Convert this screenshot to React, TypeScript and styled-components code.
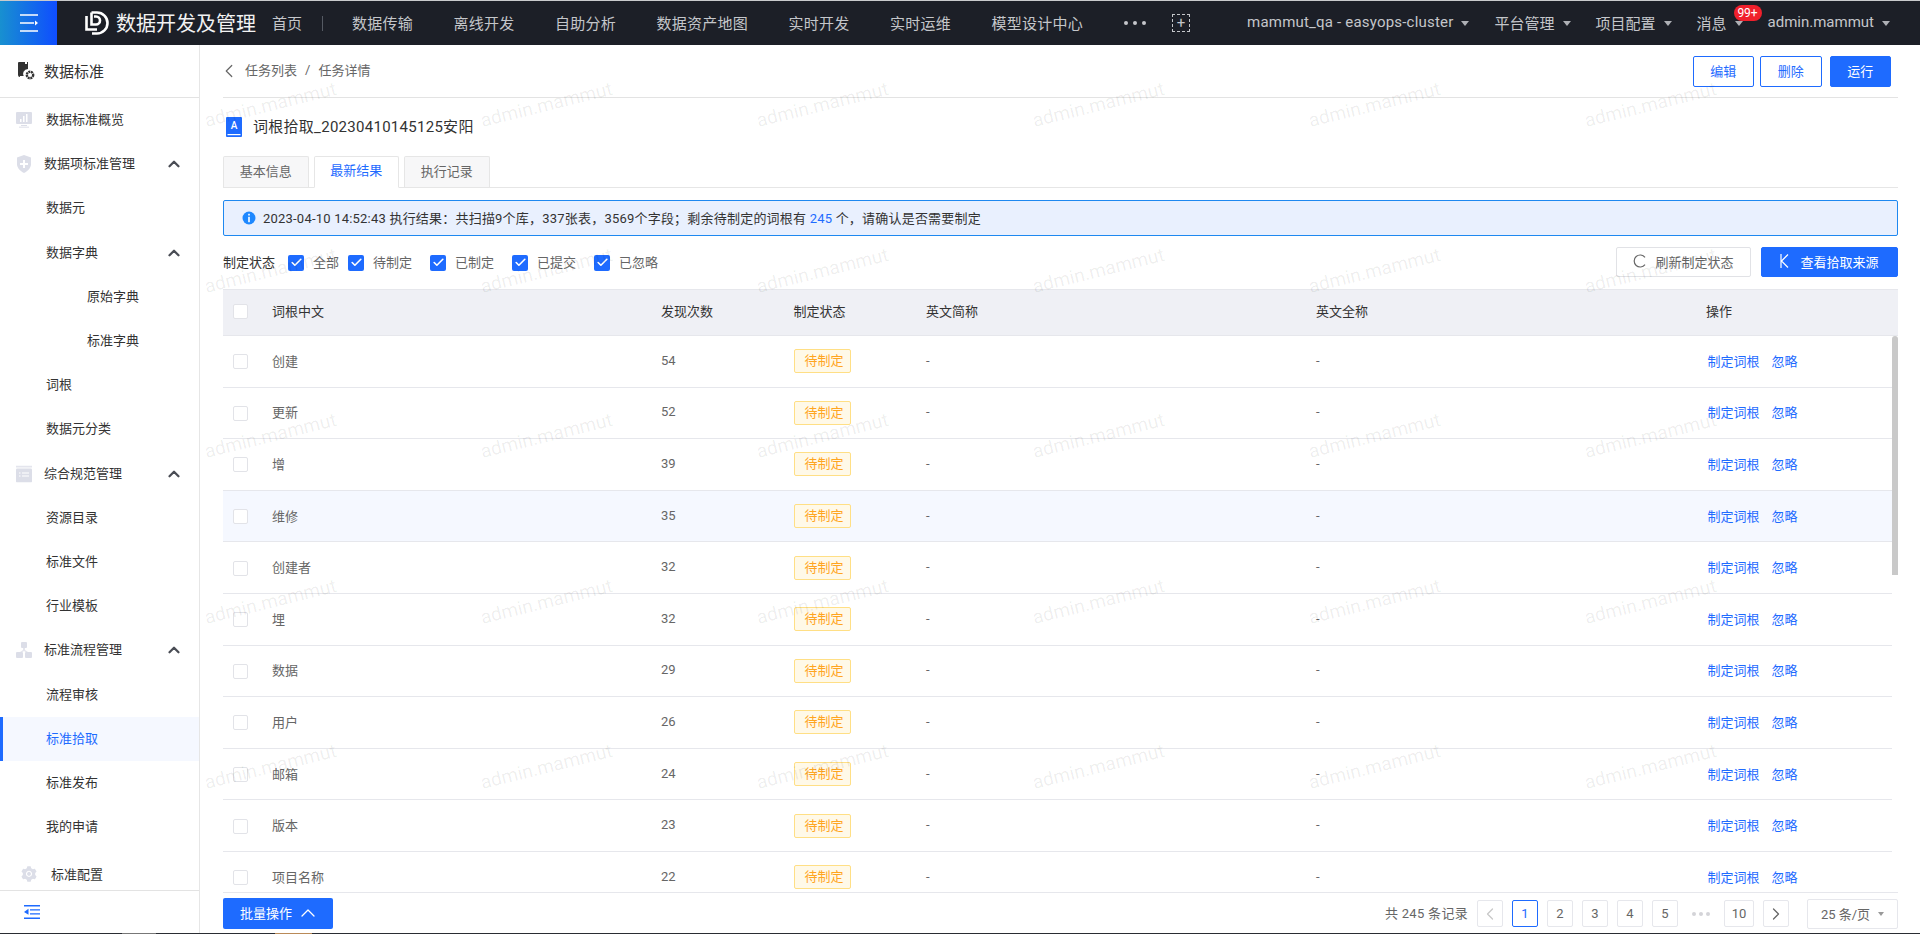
import React from 'react'
import styled, { createGlobalStyle } from 'styled-components'
import { AiFillSetting } from 'react-icons/ai'
import { Check, ChevronLeft, ChevronRight, ChevronUp } from 'lucide-react'

const BLUE = '#1e6bff'

const GlobalStyle = createGlobalStyle`
  html, body, #root {
    margin: 0;
    height: 100%;
  }
  body {
    font-family: Roboto, "Noto Sans CJK SC", sans-serif;
    font-size: 13px;
    color: #333;
    background: #fff;
    overflow: hidden;
  }
  * {
    box-sizing: border-box;
  }
`

type IconKind = 'monitor' | 'shield' | 'list' | 'tree'

type MenuEntry = {
  label: string
  indent: number
  icon?: IconKind
  open?: boolean
  active?: boolean
}

const menu: MenuEntry[] = [
  { label: '数据标准概览', indent: 46, icon: 'monitor' },
  { label: '数据项标准管理', indent: 44, icon: 'shield', open: true },
  { label: '数据元', indent: 46 },
  { label: '数据字典', indent: 46, open: true },
  { label: '原始字典', indent: 87 },
  { label: '标准字典', indent: 87 },
  { label: '词根', indent: 46 },
  { label: '数据元分类', indent: 46 },
  { label: '综合规范管理', indent: 44, icon: 'list', open: true },
  { label: '资源目录', indent: 46 },
  { label: '标准文件', indent: 46 },
  { label: '行业模板', indent: 46 },
  { label: '标准流程管理', indent: 44, icon: 'tree', open: true },
  { label: '流程审核', indent: 46 },
  { label: '标准拾取', indent: 46, active: true },
  { label: '标准发布', indent: 46 },
  { label: '我的申请', indent: 46 }
]

const navLinks = ['数据传输', '离线开发', '自助分析', '数据资产地图', '实时开发', '实时运维', '模型设计中心']

const statusFilters = ['全部', '待制定', '已制定', '已提交', '已忽略']

const roots: [string, number][] = [
  ['创建', 54],
  ['更新', 52],
  ['增', 39],
  ['维修', 35],
  ['创建者', 32],
  ['埋', 32],
  ['数据', 29],
  ['用户', 26],
  ['邮箱', 24],
  ['版本', 23],
  ['项目名称', 22]
]

const MenuIcon = ({ kind }: { kind: IconKind }) => {
  if (kind === 'monitor') {
    return (
      <svg width="16" height="16" viewBox="0 0 16 16">
        <rect width="16" height="12" rx="1" fill="#dcdee8" />
        <rect x="5" y="13" width="6" height="1" fill="#dcdee8" />
        <rect x="3" y="14.5" width="10" height="1.5" fill="#e8e9f0" />
        <rect x="4" y="7" width="1.5" height="3" fill="#fff" />
        <rect x="7" y="4" width="1.5" height="6" fill="#fff" />
        <rect x="10" y="2" width="1.5" height="8" fill="#fff" />
      </svg>
    )
  }
  if (kind === 'shield') {
    return (
      <svg width="16" height="18" viewBox="0 0 16 18">
        <path d="M8 0 15 2.5V9c0 4-3 7-7 9-4-2-7-5-7-9V2.500Z" fill="#dcdee8" />
        <path d="M7 5h2v3h3v2H9v3H7v-3H4V8h3Z" fill="#fff" />
      </svg>
    )
  }
  if (kind === 'list') {
    return (
      <svg width="16" height="17" viewBox="0 0 16 17">
        <rect width="16" height="2" fill="#e4e5ed" />
        <rect y="3" width="16" height="14" rx="1" fill="#dcdee8" />
        <path d="M3 7h1.500v1H3Zm3 0h7v1H6Zm-3 3h1.500v1H3Zm3 0h7v1H6Z" fill="#fff" />
      </svg>
    )
  }
  return (
    <svg width="16" height="16" viewBox="0 0 16 16">
      <rect x="5" width="6" height="6" rx="1" fill="#dcdee8" />
      <rect y="10" width="7" height="6" rx="1" fill="#dcdee8" />
      <rect x="9" y="10" width="7" height="6" rx="1" fill="#dcdee8" />
      <path d="M7 6h2v2l3 2H9.500L8 9 6.500 10H4l3-2Z" fill="#e4e5ed" />
    </svg>
  )
}

const App = () => (
  <Page>
    <GlobalStyle />
    <TopEdge />
    <Header>
      <MenuToggle>
        <svg width="18" height="18" viewBox="0 0 18 18" fill="none" stroke="#fff" strokeWidth="1.600">
          <path d="M0 1h18M0 9h14M0 17h18" />
          <path d="M15 6.500 18 9l-3 2.500Z" fill="#fff" stroke="none" />
        </svg>
      </MenuToggle>
      <Logo viewBox="0 0 24 24" fill="none" stroke="#fff" strokeWidth="2.600">
        <path d="M1.500 5v13.500H12" />
        <path d="M6.500 1.500H12a10.500 10.500 0 0 1 0 21H7" />
        <path d="M6.500 1.500V13.500H11a4 4 0 0 0 0-8H9" />
      </Logo>
      <ProductName>数据开发及管理</ProductName>
      <HomeLink>首页</HomeLink>
      <NavDivider />
      <NavList>
        {navLinks.map(link => (
          <NavLink key={link}>{link}</NavLink>
        ))}
      </NavList>
      <MoreDots>
        <i />
        <i />
        <i />
      </MoreDots>
      <AddBox>+</AddBox>
      <UserArea>
        <DropItem $wide>
          mammut_qa - easyops-cluster
          <Caret />
        </DropItem>
        <DropItem>
          平台管理
          <Caret />
        </DropItem>
        <DropItem>
          项目配置
          <Caret />
        </DropItem>
        <DropItem>
          消息
          <Caret />
          <Badge>99+</Badge>
        </DropItem>
        <DropItem>
          admin.mammut
          <Caret />
        </DropItem>
      </UserArea>
    </Header>
    <Body>
      <Sidebar>
        <SideTitle>
          <svg width="17" height="18" viewBox="0 0 17 18">
            <path d="M1 0h6v2h2V0h1v7a5 5 0 0 0-4 8H2a2 2 0 0 1-2-2V1a1 1 0 0 1 1-1Z" fill="#333" />
            <rect x="2" y="14" width="4" height="1.500" fill="#fff" />
            <circle cx="12" cy="13" r="3.200" fill="none" stroke="#333" strokeWidth="2.400" strokeDasharray="2 .6" />
          </svg>
          <span>数据标准</span>
        </SideTitle>
        <MenuList>
          {menu.map(item => (
            <MenuItem key={item.label} $indent={item.indent} $active={item.active}>
              {item.icon && (
                <MenuIconSlot>
                  <MenuIcon kind={item.icon} />
                </MenuIconSlot>
              )}
              {item.label}
              {item.open && <OpenArrow size={18} strokeWidth={3} />}
            </MenuItem>
          ))}
          <ConfigItem>
            <AiFillSetting size={18} color="#dcdee8" />
            <span>标准配置</span>
          </ConfigItem>
        </MenuList>
        <SideFooter>
          <svg width="16" height="14" viewBox="0 0 16 14">
            <path d="M0 0h16v1.400H0Zm6 4.200h10v1.400H6Zm0 4h10v1.400H6ZM0 12.600h16V14H0Z" fill={BLUE} />
            <path d="M4.500 3.800v6L0 7Z" fill={BLUE} />
          </svg>
        </SideFooter>
      </Sidebar>
      <Main>
        <TopBar>
          <Crumbs>
            <BackArrow size={22} color="#666" strokeWidth={1.300} />
            <CrumbLink>任务列表</CrumbLink>
            <CrumbSep>/</CrumbSep>
            <span>任务详情</span>
          </Crumbs>
          <TopActions>
            <OutlineButton>编辑</OutlineButton>
            <OutlineButton>删除</OutlineButton>
            <PrimaryButton>运行</PrimaryButton>
          </TopActions>
        </TopBar>
        <TitleRow>
          <svg width="16" height="20" viewBox="0 0 16 20">
            <rect width="16" height="20" rx="1" fill={BLUE} />
            <rect x="1.500" y="17" width="13" height="1.200" fill="#fff" />
            <text x="8" y="11.500" textAnchor="middle" fontSize="10" fontFamily="Roboto" fontWeight="500" fill="#fff">
              A
            </text>
          </svg>
          <TitleText>词根拾取_20230410145125安阳</TitleText>
        </TitleRow>
        <Tabs>
          <Tab>基本信息</Tab>
          <Tab $active>最新结果</Tab>
          <Tab>执行记录</Tab>
        </Tabs>
        <Alert>
          <svg width="14" height="14" viewBox="0 0 14 14">
            <circle cx="7" cy="7" r="6.500" fill="#1e88ff" />
            <rect x="6.200" y="2.800" width="1.600" height="1.700" fill="#fff" />
            <rect x="6.200" y="5.800" width="1.600" height="5.400" fill="#fff" />
          </svg>
          <AlertText>
            2023-04-10 14:52:43 执行结果：共扫描9个库，337张表，3569个字段；剩余待制定的词根有 <Count>245</Count> 个，请确认是否需要制定
          </AlertText>
        </Alert>
        <FilterRow>
          <FilterLabel>制定状态</FilterLabel>
          {statusFilters.map((status, index) => (
            <FilterOption key={status} $first={index === 0}>
              <CheckedBox>
                <Check size={13} color="#fff" strokeWidth={3} />
              </CheckedBox>
              {status}
            </FilterOption>
          ))}
          <FilterActions>
            <GhostButton>
              <svg width="13" height="14" viewBox="0 0 13 14" fill="none" stroke="#666" strokeWidth="1.200">
                <path d="M12 3.400A6 6 0 1 0 12 10.600" />
              </svg>
              刷新制定状态
            </GhostButton>
            <SourceButton>
              <svg width="9" height="14" viewBox="0 0 9 14" fill="none" stroke="#fff" strokeWidth="1.200">
                <path d="M1 0v14M8 0.500 1.500 7 8 13.500" />
              </svg>
              查看拾取来源
            </SourceButton>
          </FilterActions>
        </FilterRow>
        <TableWrap>
          <HeadRow>
            <span>
              <EmptyBox $drop={3} />
            </span>
            <span>词根中文</span>
            <span>发现次数</span>
            <span>制定状态</span>
            <span>英文简称</span>
            <span>英文全称</span>
            <span>操作</span>
          </HeadRow>
          <TableScroll>
            <RowList>
              {roots.map(([name, times]) => (
                <BodyRow key={name} $hover={name === '维修'}>
                  <span>
                    <EmptyBox $drop={3} />
                  </span>
                  <span>{name}</span>
                  <span>{times}</span>
                  <span>
                    <StatusTag>待制定</StatusTag>
                  </span>
                  <span>-</span>
                  <span>-</span>
                  <RowActions>
                    <TextLink>制定词根</TextLink>
                    <TextLink>忽略</TextLink>
                  </RowActions>
                </BodyRow>
              ))}
            </RowList>
            <ScrollThumb />
          </TableScroll>
        </TableWrap>
        <Footer>
          <BatchButton>
            <span>批量操作</span>
            <ChevronUp size={24} color="#fff" strokeWidth={1.300} />
          </BatchButton>
          <Pager>
            <PagerTotal>共 245 条记录</PagerTotal>
            <PageCell>
              <ChevronLeft size={20} color="#c8c8c8" strokeWidth={1.500} />
            </PageCell>
            <PageCell $current>1</PageCell>
            <PageCell>2</PageCell>
            <PageCell>3</PageCell>
            <PageCell>4</PageCell>
            <PageCell>5</PageCell>
            <PageDots>
              <i />
              <i />
              <i />
            </PageDots>
            <PageCell $wide>10</PageCell>
            <PageCell>
              <ChevronRight size={20} color="#666" strokeWidth={1.500} />
            </PageCell>
            <PageSize>
              25 条/页
              <SizeCaret />
            </PageSize>
          </Pager>
        </Footer>
        <WatermarkLayer aria-hidden="true">
          {Array.from({ length: 30 }).map((_, i) => (
            <Watermark key={i}>admin.mammut</Watermark>
          ))}
        </WatermarkLayer>
      </Main>
    </Body>
    <BottomEdge />
  </Page>
)

export default App

const Page = styled('div')`
  display: flex;
  flex-direction: column;
  width: 1920px;
  height: 934px;
  overflow: hidden;
`

const TopEdge = styled('div')`
  height: 1px;
  flex: none;
  background: #c9cacc;
`

const BottomEdge = styled('div')`
  height: 1px;
  flex: none;
  background: linear-gradient(
    to right,
    #2a2d33 0 122px,
    #777 122px 156px,
    #2a2d33 156px 275px,
    #b98a58 275px 312px,
    #2a2d33 312px
  );
`

const Header = styled('header')`
  display: flex;
  align-items: center;
  flex: none;
  height: 44px;
  padding-right: 30px;
  background: #1c1f27;
  color: #c4c6ca;
  font-size: 15px;
`

const MenuToggle = styled('div')`
  display: flex;
  align-items: center;
  justify-content: center;
  width: 57px;
  height: 100%;
  background: linear-gradient(90deg, #1890d0, #0f4dff);
`

const Logo = styled('svg')`
  width: 24px;
  height: 24px;
  margin-left: 28px;
`

const ProductName = styled('div')`
  margin-left: 7px;
  padding-bottom: 2px;
  font-size: 20px;
  color: #f2f2f2;
`

const HomeLink = styled('span')`
  margin-left: 16px;
  padding-bottom: 2px;
`

const NavDivider = styled('i')`
  width: 1px;
  height: 15px;
  margin: 0 29px 0 20px;
  background: #555a63;
`

const NavList = styled('nav')`
  display: flex;
  gap: 40.500px;
  padding-bottom: 2px;
  letter-spacing: 0.25px;
`

const NavLink = styled('span')`
  white-space: nowrap;
`

const MoreDots = styled('div')`
  display: flex;
  gap: 5px;
  margin-left: 41px;
  i {
    width: 4px;
    height: 4px;
    border-radius: 50%;
    background: #c4c6ca;
  }
`

const AddBox = styled('div')`
  display: flex;
  align-items: center;
  justify-content: center;
  width: 18px;
  height: 18px;
  margin-left: 26px;
  border: 1px dashed #c4c6ca;
  font-size: 15px;
  line-height: 1;
`

const UserArea = styled('div')`
  display: flex;
  align-items: center;
  gap: 25px;
  margin-left: auto;
`

const DropItem = styled('div')<{ $wide?: boolean }>`
  position: relative;
  display: flex;
  align-items: center;
  padding-bottom: 2px;
  letter-spacing: ${props => (props.$wide ? '0.2px' : 'normal')};
  white-space: nowrap;
`

const Caret = styled('i')`
  width: 0;
  height: 0;
  margin: 2px 0 0 8px;
  border-left: 4px solid transparent;
  border-right: 4px solid transparent;
  border-top: 5px solid #aeb0b5;
`

const Badge = styled('span')`
  position: absolute;
  top: -7px;
  right: -19px;
  width: 28px;
  height: 16px;
  border-radius: 8px;
  background: #f0202c;
  color: #fff;
  font-size: 12px;
  line-height: 16px;
  text-align: center;
`

const Body = styled('div')`
  display: flex;
  flex: 1;
  min-height: 0;
`

const Sidebar = styled('aside')`
  display: flex;
  flex-direction: column;
  flex: none;
  width: 200px;
  border-right: 1px solid #e6e6e6;
`

const SideTitle = styled('div')`
  display: flex;
  align-items: center;
  gap: 9px;
  flex: none;
  height: 53px;
  padding-left: 18px;
  border-bottom: 1px solid #e3e3e3;
  font-size: 15px;
  span {
    padding-bottom: 2px;
  }
`

const MenuList = styled('div')`
  flex: 1;
  min-height: 0;
  overflow: hidden;
`

const MenuItem = styled('div')<{ $indent: number; $active?: boolean }>`
  position: relative;
  display: flex;
  align-items: center;
  height: 44.2px;
  padding-bottom: 3px;
  padding-left: ${props => props.$indent}px;
  background: ${props => (props.$active ? '#f5f8ff' : 'transparent')};
  color: ${props => (props.$active ? BLUE : '#333')};
  border-left: ${props => (props.$active ? `3px solid ${BLUE}` : 'none')};
  ${props => props.$active && `padding-left: ${props.$indent - 3}px;`}
`

const MenuIconSlot = styled('span')`
  position: absolute;
  left: 16px;
  top: 50%;
  display: flex;
  transform: translateY(-50%);
`

const OpenArrow = styled(ChevronUp)`
  position: absolute;
  right: 16px;
  top: 13px;
  color: #4a4d55;
`

const ConfigItem = styled('div')`
  display: flex;
  align-items: center;
  gap: 13px;
  height: 44px;
  margin-top: 3px;
  padding-left: 20px;
  span {
    padding-bottom: 2px;
  }
`

const SideFooter = styled('div')`
  display: flex;
  align-items: center;
  flex: none;
  height: 43px;
  padding: 0 0 0 24px;
  border-top: 1px solid #e3e3e3;
`

const Main = styled('main')`
  position: relative;
  display: flex;
  flex-direction: column;
  flex: 1;
  min-width: 0;
  padding: 0 22px 0 23px;
  overflow: hidden;
`

const TopBar = styled('div')`
  display: flex;
  align-items: center;
  justify-content: space-between;
  flex: none;
  height: 53px;
  padding: 1px 7px 0 0;
  border-bottom: 1px solid #e3e3e3;
`

const Crumbs = styled('div')`
  display: flex;
  align-items: center;
  color: #666;
  span {
    padding-bottom: 4px;
  }
`

const BackArrow = styled(ChevronLeft)`
  margin: 0 0 1px -5px;
`

const CrumbLink = styled('span')`
  margin-left: 5px;
`

const CrumbSep = styled('span')`
  margin: 0 8px;
`

const TopActions = styled('div')`
  display: flex;
  gap: 6px;
`

const OutlineButton = styled('button')`
  width: 61.500px;
  height: 31px;
  padding: 0 0 2px;
  border: 1px solid ${BLUE};
  border-radius: 2px;
  background: #fff;
  color: ${BLUE};
  font: inherit;
`

const PrimaryButton = styled(OutlineButton)`
  margin-left: 2px;
  background: ${BLUE};
  color: #fff;
`

const TitleRow = styled('div')`
  display: flex;
  align-items: center;
  gap: 11px;
  flex: none;
  height: 58px;
  padding-left: 3px;
  font-size: 15px;
`

const TitleText = styled('span')`
  padding-bottom: 3px;
  letter-spacing: 0.28px;
`

const Tabs = styled('div')`
  display: flex;
  gap: 5px;
  flex: none;
  height: 32px;
  border-bottom: 1px solid #e6e6e6;
`

const Tab = styled('div')<{ $active?: boolean }>`
  display: flex;
  align-items: center;
  justify-content: center;
  width: 85.500px;
  height: ${props => (props.$active ? '32px' : '31px')};
  padding-bottom: ${props => (props.$active ? '5px' : '4px')};
  border: 1px solid #e6e6e6;
  border-bottom: ${props => (props.$active ? '1px solid #fff' : 'none')};
  border-radius: 2px 2px 0 0;
  background: ${props => (props.$active ? '#fff' : '#f7f7f8')};
  color: ${props => (props.$active ? BLUE : '#666')};
`

const Alert = styled('div')`
  display: flex;
  align-items: center;
  gap: 7px;
  flex: none;
  height: 36px;
  margin-top: 12px;
  padding-left: 18px;
  border: 1px solid #1e88f0;
  border-radius: 2px;
  background: #e9f0fe;
`

const AlertText = styled('span')`
  padding-bottom: 2px;
  letter-spacing: 0.21px;
`

const Count = styled('span')`
  color: ${BLUE};
`

const FilterRow = styled('div')`
  display: flex;
  align-items: center;
  flex: none;
  height: 30px;
  margin-top: 11px;
`

const FilterLabel = styled('span')`
  margin-right: 13px;
  padding-bottom: 2px;
`

const FilterOption = styled('label')<{ $first?: boolean }>`
  display: flex;
  align-items: center;
  gap: 9px;
  margin-left: ${props => (props.$first ? 0 : 18)}px;
  padding-bottom: 2px;
  color: #666;
  &:nth-of-type(2) {
    margin-left: 9px;
  }
`

const CheckedBox = styled('span')`
  display: flex;
  align-items: center;
  justify-content: center;
  width: 16px;
  height: 16px;
  margin-top: 3px;
  border-radius: 2px;
  background: ${BLUE};
`

const FilterActions = styled('div')`
  display: flex;
  gap: 10px;
  margin-left: auto;
`

const GhostButton = styled('button')`
  display: flex;
  align-items: center;
  justify-content: center;
  gap: 9px;
  width: 135px;
  height: 30px;
  padding: 0 0 2px;
  border: 1px solid #e1e2e6;
  border-radius: 2px;
  background: #fff;
  color: #666;
  font: inherit;
`

const SourceButton = styled(GhostButton)`
  gap: 11px;
  width: 137px;
  border-color: ${BLUE};
  background: ${BLUE};
  color: #fff;
`

const TableWrap = styled('div')`
  display: flex;
  flex-direction: column;
  flex: 1;
  min-height: 0;
  margin-top: 12px;
`

const columns = '49px 389px 132.500px 132.500px 390px 390px 1fr'

const HeadRow = styled('div')`
  display: grid;
  grid-template-columns: ${columns};
  align-items: center;
  flex: none;
  height: 47px;
  padding-bottom: 5px;
  border-top: 1px solid #e6e7ec;
  border-bottom: 1px solid #e6e7ec;
  background: #eff0f5;
  color: #333;
  span:first-child {
    display: flex;
    padding-left: 10px;
  }
`

const TableScroll = styled('div')`
  display: flex;
  flex: 1;
  min-height: 0;
  overflow: hidden;
`

const RowList = styled('div')`
  flex: 1;
  min-width: 0;
`

const BodyRow = styled('div')<{ $hover?: boolean }>`
  display: grid;
  grid-template-columns: ${columns};
  align-items: center;
  height: 51.600px;
  padding-bottom: 2px;
  border-bottom: 1px solid #e6e7ec;
  background: ${props => (props.$hover ? '#f5f8ff' : 'transparent')};
  color: #666;
  span:first-child {
    display: flex;
    padding-left: 10px;
  }
`

const ScrollThumb = styled('div')`
  flex: none;
  width: 6px;
  height: 239px;
  border-radius: 3px 3px 0 0;
  background: #c9c9c9;
`

const EmptyBox = styled('i')<{ $drop: number }>`
  width: 15px;
  height: 15px;
  margin-top: ${props => props.$drop}px;
  border: 1px solid #e2e3e8;
  border-radius: 2px;
  background: #fff;
`

const StatusTag = styled('span')`
  display: block;
  width: 57px;
  height: 24px;
  margin-top: 2px;
  border: 1px solid #ffdf85;
  border-radius: 2px;
  background: #fff9e8;
  color: #ffa51f;
  line-height: 21px;
  text-align: center;
`

const RowActions = styled('span')`
  display: flex;
  gap: 12px;
  padding-left: 1.500px;
`

const TextLink = styled('a')`
  color: ${BLUE};
`

const Footer = styled('div')`
  display: flex;
  align-items: center;
  justify-content: space-between;
  flex: none;
  height: 41px;
  padding-top: 1px;
  border-top: 1px solid #e6e7ec;
`

const BatchButton = styled('button')`
  display: flex;
  align-items: center;
  gap: 4px;
  width: 110px;
  height: 31px;
  padding: 0 0 1px 17px;
  border: none;
  border-radius: 2px;
  background: ${BLUE};
  color: #fff;
  font: inherit;
  span {
    padding-bottom: 2px;
  }
`

const Pager = styled('div')`
  display: flex;
  align-items: center;
  gap: 9px;
  color: #666;
`

const PagerTotal = styled('span')`
  padding-bottom: 2px;
  letter-spacing: 0.3px;
`

const PageCell = styled('div')<{ $current?: boolean; $wide?: boolean }>`
  display: flex;
  align-items: center;
  justify-content: center;
  width: ${props => (props.$wide ? 30 : 26)}px;
  height: 27px;
  border: 1px solid ${props => (props.$current ? BLUE : '#e6e7ec')};
  border-radius: 2px;
  color: ${props => (props.$current ? BLUE : '#666')};
`

const PageDots = styled('span')`
  display: flex;
  gap: 3px;
  width: 18px;
  margin: 0 5px;
  i {
    width: 4px;
    height: 4px;
    border-radius: 50%;
    background: #d4d4d8;
  }
`

const PageSize = styled('div')`
  display: flex;
  align-items: center;
  justify-content: center;
  gap: 8px;
  width: 91px;
  height: 30px;
  margin-left: 9px;
  border: 1px solid #e6e7ec;
  border-radius: 2px;
`

const SizeCaret = styled('i')`
  width: 0;
  height: 0;
  border-left: 3.500px solid transparent;
  border-right: 3.500px solid transparent;
  border-top: 4px solid #999;
`

const WatermarkLayer = styled('div')`
  position: absolute;
  top: -23px;
  left: 3px;
  display: grid;
  grid-template-columns: repeat(6, 276px);
  grid-auto-rows: 165.500px;
  align-items: center;
  pointer-events: none;
`

const Watermark = styled('span')`
  justify-self: start;
  color: rgba(0, 0, 0, 0.07);
  font-size: 19px;
  line-height: 1;
  transform: rotate(-14deg);
`
